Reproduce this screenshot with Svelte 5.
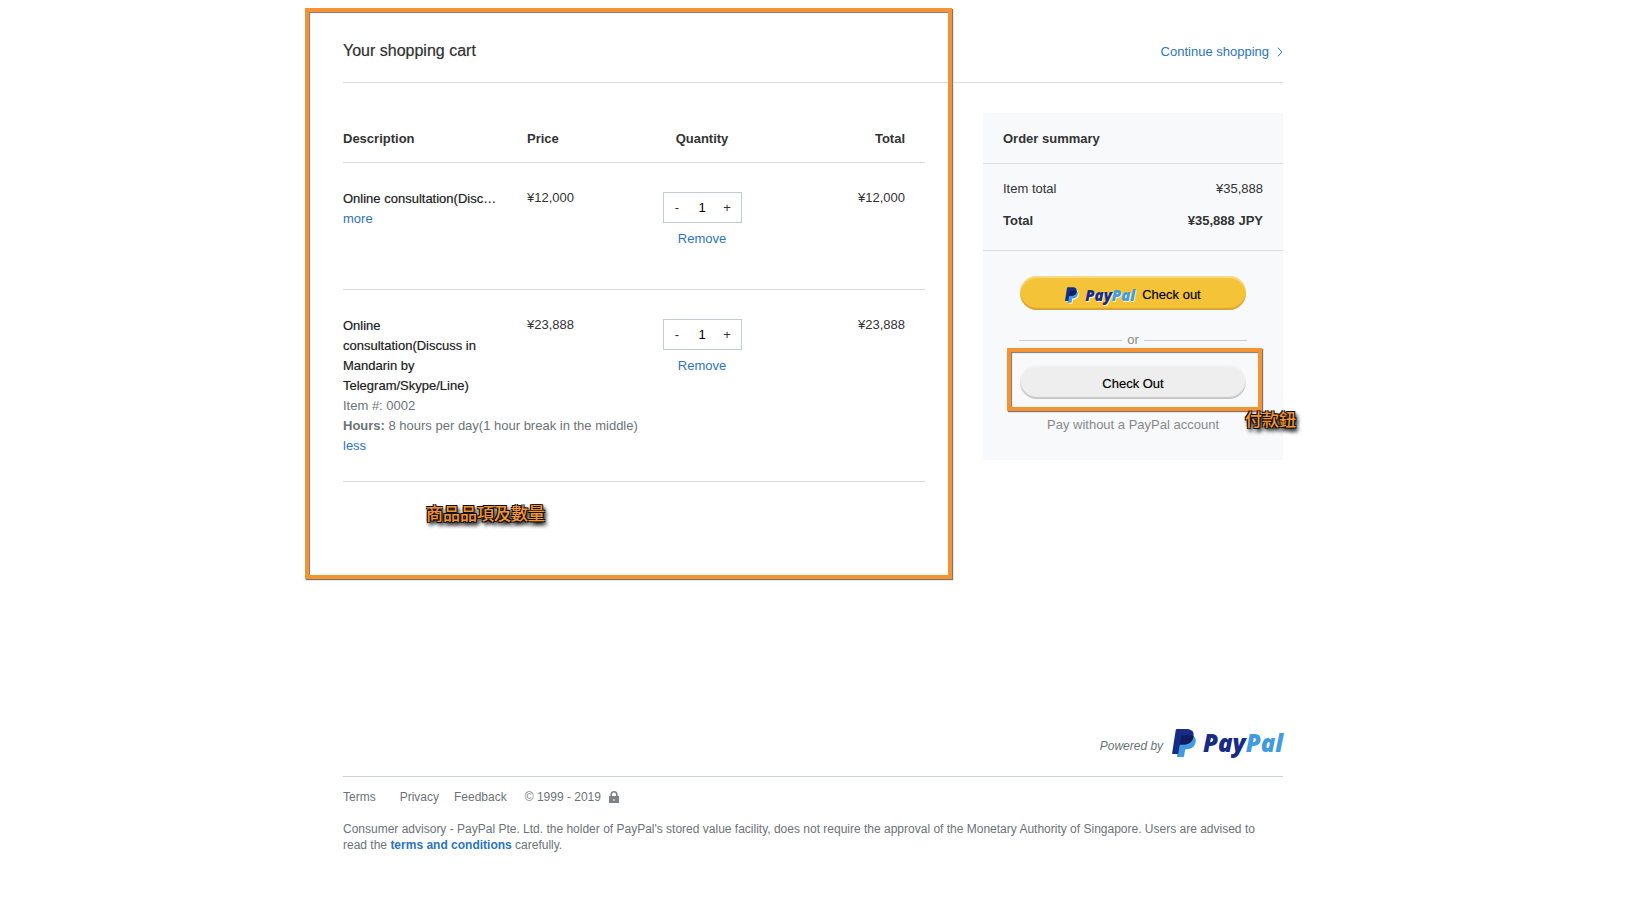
<script>
  let items = $state([
    { id: 1, name: 'Online consultation(Disc…', price: 12000, qty: 1, open: false },
    {
      id: 2,
      name: 'Online consultation(Discuss in Mandarin by Telegram/Skype/Line)',
      price: 23888,
      qty: 1,
      open: true,
      number: '0002',
      option: 'Hours:',
      value: '8 hours per day(1 hour break in the middle)'
    }
  ]);
  const yen = (n) => '¥' + n.toLocaleString('en-US');
  const total = $derived(items.reduce((sum, i) => sum + i.price * i.qty, 0));
</script>

{#snippet logo(small)}
  <span class="logo" class:small role="img" aria-label="PayPal">
    <svg viewBox="1.8 0 20.4 24" aria-hidden="true">
      <path fill="#419be0" d="M8.1 8 10.3 5.4h7.4c1.3 0 2.4.4 3.3 1.4 1.1 1.1 1.3 2.7.9 4.6-.9 4.4-3.8 5.9-7.5 5.9h-.6c-.5 0-.9.4-.9.8l-.8 5.1c-.1.5-.5.8-.9.8H6.6a.56.56 0 0 1-.6-.7l.4-2.5z" />
      <path fill="#172c85" d="M7.076 21.337H2.47a.641.641 0 0 1-.633-.74L4.944.901C5.026.382 5.474 0 5.998 0h7.46c2.57 0 4.578.543 5.69 1.81 1.01 1.15 1.304 2.42 1.012 4.287-.023.143-.047.288-.077.437-.983 5.05-4.349 6.797-8.647 6.797h-2.19c-.524 0-.968.382-1.05.9l-1.12 7.106z" />
      <path fill="#101d60" d="M9.4 6.3c.1-.5.5-.9 1-.9h5.9c1.5 0 2.8.2 3.85.8-.9 5.35-4.35 7.13-8.7 7.13h-2.2c-.52 0-.97.38-1.05.9z" />
    </svg>
    <span class="word">Pay<span class="pal">Pal</span></span>
  </span>
{/snippet}

<div class="page">
  <header>
    <h1>Your shopping cart</h1>
    <a href="#shop" class="continue">
      Continue shopping
      <svg viewBox="0 0 6 10" width="6" height="10" aria-hidden="true"><path d="M1 .7 4.8 5 1 9.3" fill="none" stroke="currentColor" /></svg>
    </a>
  </header>

  <main>
    <table>
      <colgroup><col class="c-desc" /><col class="c-price" /><col class="c-qty" /><col /></colgroup>
      <thead>
        <tr><th>Description</th><th>Price</th><th class="qty">Quantity</th><th class="sum">Total</th></tr>
      </thead>
      <tbody>
        {#each items as item (item.id)}
          <tr>
            <td class="desc">
              <div class="name">{item.name}</div>
              {#if item.open}
                <div class="detail">Item #: {item.number}</div>
                <div class="detail"><b>{item.option}</b> {item.value}</div>
              {/if}
              <a href="#item">{item.open ? 'less' : 'more'}</a>
            </td>
            <td class="amount">{yen(item.price)}</td>
            <td class="qty">
              <div class="stepper">
                <button type="button" aria-label="Decrease" onclick={() => (item.qty = Math.max(1, item.qty - 1))}>-</button>
                <input type="text" aria-label="Quantity" bind:value={item.qty} />
                <button type="button" aria-label="Increase" onclick={() => (item.qty = +item.qty + 1)}>+</button>
              </div>
              <a href="#remove">Remove</a>
            </td>
            <td class="amount sum">{yen(item.price * item.qty)}</td>
          </tr>
        {/each}
      </tbody>
    </table>

    <aside>
      <h2>Order summary</h2>
      <div class="totals">
        <div class="line"><span>Item total</span><span>{yen(total)}</span></div>
        <div class="line strong"><span>Total</span><span>{yen(total)} JPY</span></div>
      </div>
      <div class="pay">
        <button type="button" class="pill gold">{@render logo(true)}<span class="medium">Check out</span></button>
        <div class="or">or</div>
        <div class="guest">
          <button type="button" class="pill grey"><span class="medium">Check Out</span></button>
          <div class="frame guest-frame"></div>
          <span class="note guest-note">付款鈕</span>
        </div>
        <p>Pay without a PayPal account</p>
      </div>
    </aside>
  </main>

  <footer>
    <div class="powered"><i>Powered by</i>{@render logo(false)}</div>
    <nav>
      <a href="#terms">Terms</a>
      <a href="#privacy">Privacy</a>
      <a href="#feedback">Feedback</a>
      <span class="copy">© 1999 - 2019
        <svg viewBox="0 0 10 12" width="10" height="12" aria-hidden="true">
          <path fill="none" stroke="#7b8388" stroke-width="1.6" d="M2.2 6V3.6a2.8 2.8 0 0 1 5.6 0V6" />
          <path fill="#7b8388" fill-rule="evenodd" d="M0 5h10v7H0zM4.5 8v2h1V8z" />
        </svg>
      </span>
    </nav>
    <p>Consumer advisory - PayPal Pte. Ltd. the holder of PayPal's stored value facility, does not require the approval of the Monetary Authority of Singapore. Users are advised to read the <a href="#conditions">terms and conditions</a> carefully.</p>
  </footer>

  <div class="frame cart-frame"></div>
  <span class="note cart-note">商品品項及數量</span>
</div>

<style>
  :global(body) { margin: 0; background: #fff; }
  .page {
    position: relative;
    box-sizing: border-box;
    max-width: 941px;
    margin: 0 auto;
    padding: 0 0 40px 1px;
    font: 13px/20px "Liberation Sans", Arial, sans-serif;
    color: #333;
  }
  a { color: #2b74bf; text-decoration: none; }
  h1, h2, p { margin: 0; }
  button, input { font: inherit; }

  header {
    display: flex;
    justify-content: space-between;
    align-items: center;
    padding: 39px 0 19px;
    border-bottom: 1px solid #ddd;
  }
  h1 { font-size: 16px; line-height: 24px; font-weight: 400; }
  h1, .name, .medium { text-shadow: 0 0 1px rgba(40, 40, 40, 0.4); }
  .continue { display: flex; align-items: center; gap: 8px; padding-top: 2px; }

  main { display: flex; align-items: flex-start; gap: 58px; margin-top: 30px; }
  table { flex: 1; width: 0; min-width: 0; table-layout: fixed; border-spacing: 0; }
  .c-desc { width: 184px; }
  .c-price { width: 115px; }
  .c-qty { width: 120px; }
  th, td { padding: 0; text-align: left; vertical-align: top; border-bottom: 1px solid #ddd; }
  th { padding: 16px 0 13px; }
  td { padding: 25px 0; }
  .desc { padding-top: 26px; white-space: nowrap; }
  .name { width: 158px; white-space: normal; color: #222; }
  .detail { color: #6c7378; }
  td.qty { padding: 29px 0 40px; }
  .qty { text-align: center; }
  th.sum, td.sum { padding-right: 20px; text-align: right; }
  .stepper {
    display: flex;
    box-sizing: border-box;
    width: 79px;
    height: 31px;
    margin: 0 auto 6px;
    border: 1px solid #c3cdcf;
  }
  .stepper button { width: 27px; padding: 0; border: 0; background: none; color: #333; }
  .stepper input {
    flex: 1;
    min-width: 0;
    padding: 0;
    border: 0;
    background: none;
    color: #000;
    text-align: center;
  }

  aside { flex: 0 0 300px; background: #f7f9fb; }
  h2 { padding: 16px 20px 14px; font-size: 13px; line-height: 20px; border-bottom: 1px solid #ddd; }
  .totals { display: grid; gap: 12px; padding: 15px 20px 19px; border-bottom: 1px solid #ddd; }
  .line { display: flex; justify-content: space-between; }
  .strong { font-weight: 700; }
  .pay { padding: 25px 36px; text-align: center; }
  .pill {
    display: flex;
    align-items: center;
    justify-content: center;
    gap: 7px;
    width: calc(100% - 2px);
    height: 34px;
    margin: 0 auto;
    padding: 4px 0 0;
    border: 0;
    border-radius: 17px;
    color: #000;
  }
  .gold { background: #f5c338; box-shadow: inset 0 2px 1px #f9d983, inset 0 -2px 1px #dba433; }
  .grey { background: #eee; box-shadow: inset 0 2px 1px #f3f3f3, inset 0 -2px 1px #c6c6c6; }
  .or { display: flex; align-items: center; gap: 5px; margin: 20px 0 15px; color: #888; }
  .or::before, .or::after { content: ""; flex: 1; height: 1px; background: #ccc; }
  .guest { position: relative; }
  .pay p { margin-top: 16px; color: #888; }

  .logo { display: inline-flex; align-items: center; gap: 7px; }
  .logo svg { width: 24px; height: 28px; }
  .word { font: italic 800 24px/28px "Open Sans", sans-serif; color: #172c85; }
  .pal { color: #419be0; }
  .small svg { width: 13px; height: 16px; filter: drop-shadow(1px 1px 0 #fff3cd); }
  .small .word { font-size: 15px; line-height: 16px; text-shadow: 1px 1px 0 #fff3cd; }

  footer { margin-top: 247px; font-size: 12px; color: #6c7378; }
  .powered {
    display: flex;
    justify-content: flex-end;
    align-items: center;
    gap: 9px;
    padding-bottom: 19px;
    border-bottom: 1px solid #ccd5d5;
  }
  .powered i { padding-top: 5px; }
  nav { display: flex; align-items: center; padding: 10px 0 14px; }
  nav a { color: inherit; }
  nav a:nth-child(1) { margin-right: 24px; }
  nav a:nth-child(2) { margin-right: 15px; }
  nav a:nth-child(3) { margin-right: 18px; }
  .copy { display: flex; align-items: center; gap: 8px; }
  footer p { padding-right: 18px; line-height: 16px; }
  footer p a { font-weight: 700; }

  .frame {
    position: absolute;
    box-sizing: border-box;
    border: 4px solid #f69331;
    box-shadow: 1px 1px 1px #777, inset 1px 1px 1px #777;
    pointer-events: none;
  }
  .cart-frame { left: -37px; right: 331px; top: 8px; height: 571px; }
  .guest-frame { left: -12px; right: -15px; top: -17px; height: 63px; }
  .note {
    position: absolute;
    font: 500 17px/24px "Noto Sans CJK TC", sans-serif;
    white-space: nowrap;
    color: #f69331;
    text-shadow: -1px -1px 0 #111, 1px -1px 0 #111, -1px 1px 0 #111, 1px 1px 0 #111, 2px 3px 4px #000, 2px 3px 4px #000;
  }
  .cart-note { left: 84px; top: 501px; }
  .guest-note { left: 226px; top: 42px; }
</style>
